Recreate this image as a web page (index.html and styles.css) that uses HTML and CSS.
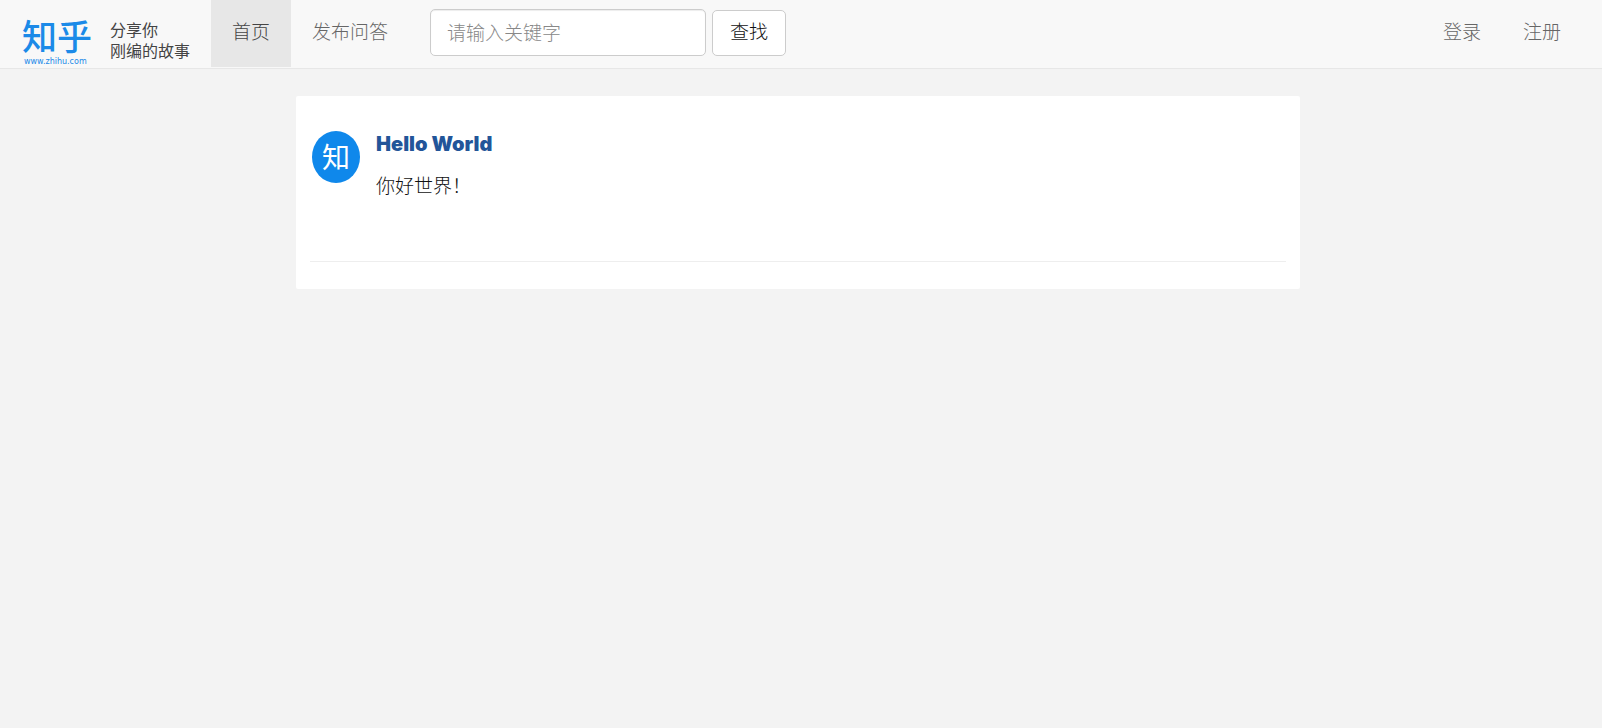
FILE: index.html
```html
<!DOCTYPE html>
<html lang="zh-CN">
<head>
<meta charset="utf-8">
<title>首页</title>
<link rel="stylesheet" href="styles.css">
</head>
<body>
<header class="navbar">
  <a class="brand" href="#">
    <span class="brand-mark">
      <span class="brand-name">知乎</span>
      <span class="brand-url">www.zhihu.com</span>
    </span>
    <span class="brand-slogan">分享你<br>刚编的故事</span>
  </a>
  <nav class="nav">
    <a class="nav-link active" href="#">首页</a>
    <a class="nav-link" href="#">发布问答</a>
  </nav>
  <form class="search">
    <input class="search-input" type="text" placeholder="请输入关键字" aria-label="请输入关键字">
    <button class="search-button" type="button">查找</button>
  </form>
  <nav class="nav nav-right">
    <a class="nav-link" href="#">登录</a>
    <a class="nav-link" href="#">注册</a>
  </nav>
</header>
<main class="page">
  <section class="panel">
    <article class="question">
      <span class="avatar">知</span>
      <div class="question-body">
        <h4 class="question-title"><a href="#">Hello World</a></h4>
        <p class="question-text">你好世界！</p>
      </div>
    </article>
    <hr class="divider">
  </section>
</main>
</body>
</html>
```
FILE: styles.css
```css
* {
  box-sizing: border-box;
}

body {
  margin: 0;
  background: #f3f3f3;
  color: #111;
  font-family: "Noto Sans CJK SC", sans-serif;
  font-size: 19px;
  font-weight: 300;
  line-height: 28px;
}

a {
  color: inherit;
  text-decoration: none;
}

.navbar {
  display: flex;
  align-items: flex-start;
  padding-right: 20px;
  background: #f8f8f8;
  border-bottom: 1px solid #e7e7e7;
}

.brand {
  display: flex;
  gap: 18px;
  width: 211px;
  height: 68px;
  padding: 17px 0 0 22px;
}

.brand-mark {
  display: flex;
  flex-direction: column;
  width: 70px;
  color: #1b8ae8;
}

.brand-name {
  font-size: 35px;
  font-weight: 500;
  line-height: 36px;
}

.brand-url {
  padding-left: 2px;
  font-family: "DejaVu Sans", sans-serif;
  font-size: 8px;
  font-weight: 400;
  line-height: 18px;
}

.brand-slogan {
  padding-top: 2px;
  color: #444;
  font-size: 16px;
  font-weight: 400;
  line-height: 21px;
  white-space: nowrap;
}

.nav {
  display: flex;
}

.nav-link {
  padding: 17px 21px 22px;
  color: #666;
}

.nav-link.active {
  background: #e7e7e7;
  color: #444;
}

.nav-right {
  margin-left: auto;
}

.search {
  display: flex;
  align-items: flex-end;
  gap: 6px;
  padding: 9px 0 0 21px;
}

.search-input,
.search-button {
  font: inherit;
  background: #fff;
  border: 1px solid #ccc;
  border-radius: 5px;
}

.search-input {
  width: 276px;
  height: 47px;
  padding: 0 16px 2px;
  box-shadow: inset 0 1px 1px rgba(0, 0, 0, 0.075);
}

.search-input::placeholder {
  color: #888;
  opacity: 1;
}

.search-button {
  width: 74px;
  height: 46px;
  padding: 0 0 4px;
  color: #111;
}

.page {
  padding: 27px 6px 27px 0;
}

.panel {
  max-width: 1004px;
  margin: 0 auto;
  padding: 35px 14px 27px;
  background: #fff;
  border-radius: 2px;
}

.question {
  display: flex;
  gap: 16px;
  min-height: 130px;
  padding-left: 2px;
}

.avatar {
  width: 48px;
  height: 52px;
  border-radius: 50%;
  background: #0f88eb;
  color: #fff;
  font-size: 28px;
  font-weight: 400;
  line-height: 50px;
  text-align: center;
}

.question-title {
  margin: 0 0 14px;
  color: #225599;
  font-family: Inter, sans-serif;
  font-size: 20px;
  font-weight: 900;
  line-height: 26px;
}

.question-text {
  margin: 0;
}

.divider {
  margin: 0;
  border: 0;
  border-top: 1px solid #eee;
}
```
